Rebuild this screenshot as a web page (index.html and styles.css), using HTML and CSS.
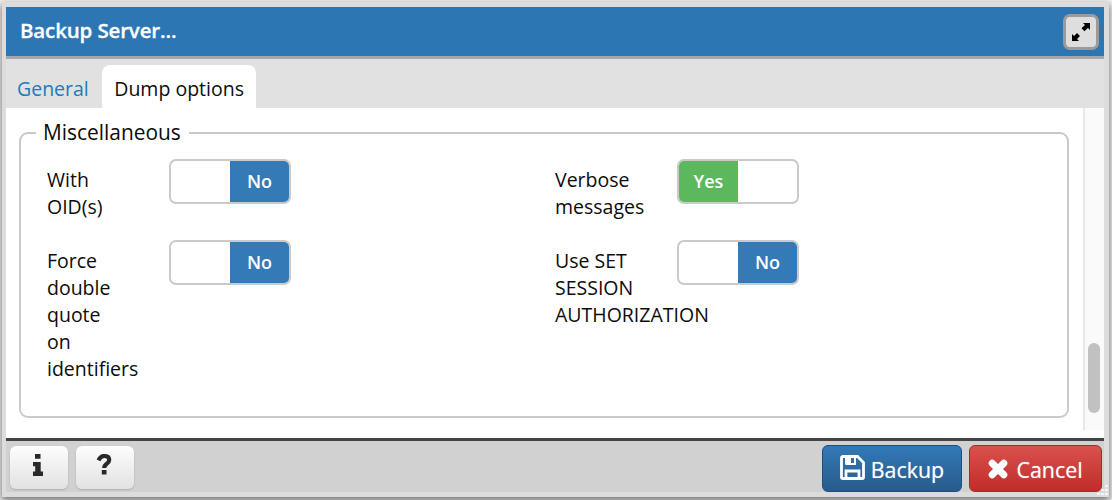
FILE: index.html
```html
<!DOCTYPE html>
<html lang="en">
<head>
<meta charset="utf-8">
<title>Backup Server</title>
<link rel="stylesheet" href="styles.css">
</head>
<body>
<div class="dialog">
  <header class="titlebar">
    <h1 class="title">Backup Server...</h1>
    <button class="maximize" aria-label="Maximize">
      <svg width="20" height="20" viewBox="0 0 20 20"><path d="M12 1h7v7l-2-2-3.500 3.300-3-3L14 3zM8 19H1v-7l2 2 3-3 3 3-3 3z"/></svg>
    </button>
  </header>
  <nav class="tabs">
    <a class="tab">General</a>
    <a class="tab active">Dump options</a>
  </nav>
  <main class="content">
    <div class="pane">
      <fieldset class="group">
        <legend class="legend"><span class="legend-text">Miscellaneous</span></legend>
        <div class="options">
          <div class="option"><span class="label">With OID(s)</span><span class="switch"><span class="blank"></span><span class="no">No</span></span></div>
          <div class="option"><span class="label">Verbose messages</span><span class="switch"><span class="yes">Yes</span><span class="blank"></span></span></div>
          <div class="option"><span class="label">Force double quote on identifiers</span><span class="switch"><span class="blank"></span><span class="no">No</span></span></div>
          <div class="option"><span class="label">Use SET SESSION AUTHORIZATION</span><span class="switch"><span class="blank"></span><span class="no">No</span></span></div>
        </div>
      </fieldset>
    </div>
    <div class="track"><div class="thumb"></div></div>
  </main>
  <footer class="footer">
    <button class="btn small" aria-label="Info"><svg width="12" height="22" viewBox="0 0 12 22"><path d="M3 0h5.500v4.800H3zM1 8h7.700v9.500H11V22H1v-4.500h2.200v-5.200H1z"/></svg></button>
    <button class="btn small" aria-label="Help"><svg width="16" height="22" viewBox="0 0 16 22"><path class="hook" d="M2.500 6.300C4 3.200 6 2 8.300 2c3 0 4.900 1.500 4.900 4 0 3.800-5 3.500-5 8"/><path d="M5.800 16h4.700v4.500H5.800z"/></svg></button>
    <span class="spacer"></span>
    <button class="btn primary"><svg width="25" height="25" viewBox="0 0 25 25"><path class="disk" d="M2.800 1.500h14.700l6 6v14.700a1.300 1.300 0 0 1-1.300 1.300H2.800a1.300 1.300 0 0 1-1.300-1.300V2.800a1.300 1.300 0 0 1 1.300-1.300zM6 23v-7h13v7"/><path d="M5 2h11v8H6.500A1.500 1.500 0 0 1 5 8.500z"/><path class="notch" d="M11 3h3v5h-3z"/></svg><span>Backup</span></button>
    <button class="btn danger"><svg width="20" height="20" viewBox="0 0 20 20"><path class="cross" d="M4.200 4.200l11.600 11.600M15.800 4.200l-11.600 11.600"/></svg><span>Cancel</span></button>
  </footer>
  <svg class="grip" width="13" height="13" viewBox="0 0 13 13"><path d="M9 1h3v2H9zM5 5h3v2H5zM9 5h3v2H9zM1 9h3v2H1zM5 9h3v2H5zM9 9h3v2H9z"/></svg>
</div>
</body>
</html>
```
FILE: styles.css
```css
* { box-sizing: border-box; }
body {
  margin: 0;
  height: 500px;
  overflow: hidden;
  padding: 2px 3px 3px 2px;
  background: #f5f5f5;
  font-family: "Open Sans", sans-serif;
  font-size: 19.500px;
  line-height: 27px;
  color: #0c0c0c;
}
button { font: inherit; margin: 0; padding: 0; }
svg { display: block; }
.dialog {
  position: relative;
  height: 495px;
  display: flex;
  flex-direction: column;
  border: 5px solid #dcdcdc;
  border-left-width: 4px;
  box-shadow: 0 3px 7px 1px rgba(0, 0, 0, .5);
}
.titlebar {
  height: 52px;
  flex: none;
  display: flex;
  align-items: center;
  justify-content: space-between;
  padding: 0 5px 0 14px;
  background: #2c76b4;
  border-bottom: 3px solid #a5a7aa;
}
.title { margin: 0; padding-bottom: 2px; font-size: 20.500px; font-weight: 600; letter-spacing: -.150px; color: #fff; -webkit-text-stroke: .300px #fff; }
.maximize {
  width: 36px;
  height: 36px;
  display: grid;
  place-items: center;
  border: 3px solid #9b9b9b;
  border-radius: 7px;
  background: #dedede;
}
.tabs {
  height: 49px;
  flex: none;
  display: flex;
  align-items: flex-end;
  background: #e1e1e1;
}
.tab { height: 43px; padding: 10px 13px 0 11px; color: #2279bd; }
.tab.active { padding: 10px 12px 0 12.500px; color: #0c0c0c; background: #fff; border-radius: 8px 8px 0 0; }
.content { height: 330px; flex: none; display: flex; background: #fff; }
.pane { flex: 1; padding: 10px 14px 0 13px; }
.group {
  height: 300px;
  margin: 0;
  padding: 0 0 0 26px;
  border: 2px solid #c9c9c9;
  border-radius: 9px;
}
.legend { margin-left: -11px; padding: 0 8px 0 7px; font-size: 20.900px; line-height: 30px; }
.legend-text { position: relative; top: -1px; }
.options { display: grid; grid-template-columns: 508px 1fr; padding-top: 11px; }
.option { display: flex; align-items: flex-start; min-height: 81px; }
.label { width: 80px; padding-top: 7px; flex: none; }
.switch {
  display: flex;
  width: 122px;
  height: 45px;
  margin-left: 42px;
  border: 2px solid #cacaca;
  border-radius: 7px;
  overflow: hidden;
  background: #fff;
  color: #fff;
  font-size: 18px;
  font-weight: 600;
  line-height: 41px;
  text-align: center;
}
.blank, .no, .yes { flex: 1; }
.no { background: #337ab7; }
.yes { background: #5cb85c; }
.track { width: 21px; height: 322px; background: #fafafa; border-left: 2px solid #e8e8e8; padding: 235px 4px 0 3px; }
.thumb { width: 12px; height: 70px; border-radius: 6px; background: #c1c1c1; }
.footer {
  flex: 1;
  display: flex;
  align-items: flex-start;
  padding: 4px 2px 0 4px;
  border-top: 3px solid #444;
  background: #d1d1d1;
}
.btn { display: flex; align-items: center; justify-content: center; flex: none; border-radius: 6px; }
.small {
  width: 58px;
  height: 43px;
  margin: 1px 8px 0 0;
  padding: 0 2px 5px 0;
  border: 0;
  background: linear-gradient(#fdfdfd, #e2e2e2);
  box-shadow: 0 1px 2px rgba(0, 0, 0, .18);
  fill: #292929;
}
.hook { fill: none; stroke: #292929; stroke-width: 4.200; }
.spacer { flex: 1; }
.primary, .danger {
  height: 47px;
  color: #fff;
  fill: #fff;
  font-size: 21.400px;
  text-shadow: 0 0 1px rgba(255, 255, 255, .6);
}
.primary { width: 140px; gap: 6px; margin-right: 7px; border: 1px solid #1b4e7e; background: linear-gradient(#3279b7, #285b8b); }
.primary svg { margin-top: -3px; }
.disk { fill: none; stroke: #fff; stroke-width: 2.800; }
.notch { fill: #2f70aa; }
.danger { width: 133px; gap: 8px; border: 1px solid #b52323; background: linear-gradient(#d9514e, #c12c2a); }
.cross { stroke: #fff; stroke-width: 7; stroke-linecap: round; }
.btn span { padding-top: 1px; }
.grip { position: absolute; right: -5px; bottom: -5px; fill: #f5f5f5; }
```
